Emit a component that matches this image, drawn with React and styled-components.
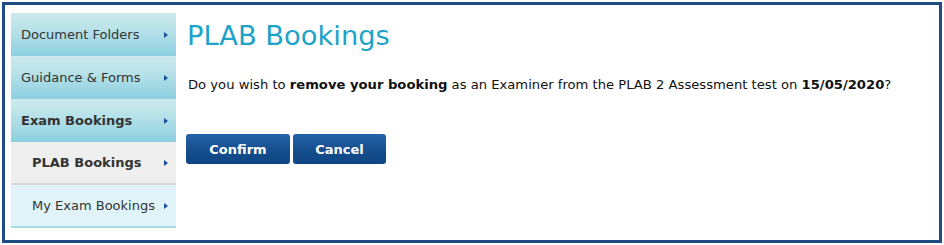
import React from "react";
import styled, { createGlobalStyle } from "styled-components";

const GlobalStyle = createGlobalStyle`
  html, body {
    margin: 0;
    padding: 0;
    background: #fff;
  }
  body {
    font-family: "DejaVu Sans", Verdana, sans-serif;
  }
`;

const menu = [
  { label: "Document Folders", kind: "top" },
  { label: "Guidance & Forms", kind: "top" },
  { label: "Exam Bookings", kind: "top", bold: true },
  { label: "PLAB Bookings", kind: "active", bold: true },
  { label: "My Exam Bookings", kind: "sub" },
];

const App = () => {
  return (
    <>
      <GlobalStyle />
      <Frame>
        <Sidebar>
          {menu.map((item) => (
            <MenuItem key={item.label} kind={item.kind} bold={item.bold}>
              <span>{item.label}</span>
              <Arrow />
            </MenuItem>
          ))}
        </Sidebar>
        <Content>
          <Title>PLAB Bookings</Title>
          <Question>
            Do you wish to <b>remove your booking</b> as an Examiner from the
            PLAB 2 Assessment test on <b>15/05/2020</b>?
          </Question>
          <Buttons>
            <Button width="104px">Confirm</Button>
            <Button width="93px">Cancel</Button>
          </Buttons>
        </Content>
      </Frame>
    </>
  );
};

const Frame = styled.div`
  box-sizing: border-box;
  margin: 2px;
  width: 940px;
  height: 241px;
  border: 3px solid #1f4b82;
  padding: 8px 0 0 6px;
  display: flex;
  gap: 11px;
`;

const Sidebar = styled.nav`
  width: 165px;
  display: flex;
  flex-direction: column;
`;

const backgrounds = {
  top: "linear-gradient(to bottom, #cdeaee 0%, #b4e0e8 45%, #8ccfe0 100%)",
  active: "#efefef",
  sub: "#dff3f8",
};

const MenuItem = styled.div`
  box-sizing: border-box;
  height: 43px;
  flex-shrink: 0;
  display: flex;
  align-items: center;
  justify-content: space-between;
  padding: 0 8px 0 ${({ kind }) => (kind === "top" ? "10px" : "21px")};
  background: ${({ kind }) => backgrounds[kind]};
  border-bottom: ${({ kind }) =>
    kind === "active"
      ? "2px solid #d6d6d6"
      : kind === "sub"
      ? "2px solid #a9dbe4"
      : "none"};
  font-size: 13px;
  font-weight: ${({ bold }) => (bold ? 700 : 400)};
  color: #333;
`;

const Arrow = styled.i`
  width: 0;
  height: 0;
  border-top: 3.5px solid transparent;
  border-bottom: 3.5px solid transparent;
  border-left: 4px solid #1a4f9c;
`;

const Content = styled.main`
  flex: 1;
  padding-top: 5px;
`;

const Title = styled.h1`
  margin: 0;
  font-size: 27.3px;
  font-weight: 400;
  color: #1ea3c8;
  line-height: 36px;
`;

const Question = styled.p`
  margin: 22px 0 0 1px;
  font-size: 13.15px;
  color: #111;
  line-height: 18px;
  b {
    font-weight: 700;
  }
`;

const Buttons = styled.div`
  display: flex;
  gap: 3px;
  margin: 40px 0 0 -1px;
`;

const Button = styled.button`
  width: ${({ width }) => width};
  height: 30px;
  border: none;
  border-radius: 3px;
  background: linear-gradient(to bottom, #2563aa 0%, #17508f 50%, #0e4483 100%);
  color: #fff;
  font-family: "DejaVu Sans", Verdana, sans-serif;
  font-size: 13px;
  font-weight: 700;
  cursor: pointer;
`;

export default App;
